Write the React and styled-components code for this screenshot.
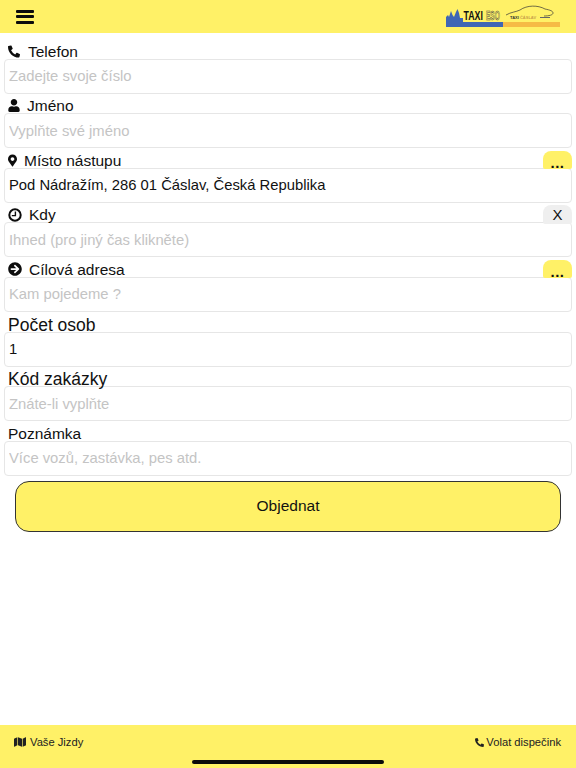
import React from "react";
import styled, { createGlobalStyle } from "styled-components";
import { FaPhoneAlt, FaUser, FaMapMarkerAlt, FaArrowCircleRight, FaMap } from "react-icons/fa";

const Global = createGlobalStyle`
  html, body { margin: 0; padding: 0; background: #fff; }
  #root { height: 768px; }
  * { box-sizing: border-box; }
`;
const Page = styled.div`
  width: 576px; height: 768px; display: flex; flex-direction: column;
  font-family: "Liberation Sans", Arial, sans-serif; color: #111; overflow: hidden; position: relative;
`;
const Header = styled.header`
  height: 33px; flex: none; background: #fff167; display: flex; align-items: center;
  justify-content: space-between; padding: 0 14px 0 16px;
`;
const Burger = styled.div`
  width: 18px; height: 14px; display: flex; flex-direction: column; justify-content: space-between;
  span { display: block; height: 3px; background: #0c0c0c; border-radius: 1px; }
`;
const Form = styled.main`
  flex: 1; padding: 6px 4px 0; display: flex; flex-direction: column;
`;
const Field = styled.div`
  display: flex; flex-direction: column; height: 54.6px; justify-content: flex-end; position: relative;
`;
const Label = styled.label`
  display: flex; align-items: center; font-size: ${p => p.$size || 15.5}px; line-height: 17px; height: 17px;
  margin-bottom: ${p => (p.$size > 16 ? -2 : -1)}px;
  padding-left: 4px; gap: ${p => p.$gap ?? 8}px; color: #111; white-space: nowrap;
  position: relative; z-index: 2; pointer-events: none;
`;
const IconSlot = styled.span`
  display: inline-flex; align-items: center; justify-content: center; width: ${p => p.$w || 12}px;
  color: #0d0d0d;
`;
const Input = styled.input`
  display: block; width: 100%; height: 35px; flex: none; border: 1px solid #e6e6e6; border-radius: 4px;
  padding: 0 4px; font: 14.8px "Liberation Sans", Arial, sans-serif; color: #111; background: #fff; outline: none;
  position: relative; z-index: 1;
  &::placeholder { color: #c4c4c4; opacity: 1; }
`;
const Pill = styled.button`
  position: absolute; right: 0; top: 2.6px; width: 29px; height: 18.4px; border: none; border-radius: 8px 8px 2px 2px;
  background: ${p => (p.$grey ? "#efefef" : "#fff167")}; color: #111; font: 15px "Liberation Sans", Arial, sans-serif;
  padding: ${p => (p.$grey ? "1px 0 0" : "3px 0 0")}; text-align: center; line-height: 18px;
  letter-spacing: ${p => (p.$grey ? 0 : "0.5px")};
  font-weight: ${p => (p.$grey ? 400 : 700)};
  z-index: 2;
`;
const Submit = styled.button`
  display: block; width: 546px; height: 51px; margin: 5px 0 0 11px; flex: none; background: #fff167;
  border: 1px solid #333; border-radius: 14px; font: 15.5px "Liberation Sans", Arial, sans-serif; color: #111;
`;
const Footer = styled.footer`
  height: 43px; flex: none; background: #fff167; display: flex; justify-content: space-between;
  padding: 10px 15px 0 14px; font-size: 11.2px; color: #222;
`;
const FootLink = styled.span`
  display: inline-flex; align-items: center; gap: ${p => p.$gap}px; height: 14px; white-space: nowrap;
`;
const HomeBar = styled.div`
  position: absolute; left: 192px; bottom: 4px; width: 192px; height: 4px; border-radius: 2px; background: #0a0a0a;
`;

const Clock = () => (
  <svg width="14" height="14" viewBox="0 0 14 14" fill="none" stroke="#0d0d0d">
    <circle cx="7" cy="7" r="5.7" strokeWidth="2" />
    <path d="M7.4 3.6V7.6H3.8" strokeWidth="1.4" />
  </svg>
);

const Logo = () => (
  <svg width="116" height="27" viewBox="0 0 116 27">
    <rect x="0" y="19" width="57" height="5" fill="#3f66b5" />
    <rect x="57" y="19" width="57" height="5" fill="#f6bb45" />
    <path d="M0 20V14L2 12L3 14L5 8L6.5 12L8 14L10 9L11.5 6L13 10L14 15L17 15V20Z" fill="#3f66b5" />
    <g transform="translate(17.5 17) scale(0.68 1)">
      <text fontFamily="Liberation Sans, sans-serif" fontWeight="700" fontSize="13" fill="#111">TAXI</text>
    </g>
    <g transform="translate(40 17) scale(0.5 1)">
      <text fontFamily="Liberation Sans, sans-serif" fontWeight="700" fontSize="13" fill="#fff167" stroke="#444" strokeWidth="0.6">ESO</text>
    </g>
    <path d="M60 12C65 9 70 9 74 7C81 2 92 2 99 6C104 7 107 8 107 10C107 12 103 13 98 13" fill="none" stroke="#333" strokeWidth="0.7" />
    <text x="64" y="15.5" fontFamily="Liberation Sans, sans-serif" fontWeight="700" fontSize="4" fill="#333">
      TAXI <tspan fill="#c9a04a">ČÁSLAV</tspan>
    </text>
    <rect x="94" y="14" width="10" height="1" fill="#666" />
  </svg>
);

const fields = [
  { label: "Telefon", icon: <FaPhoneAlt size={13} />, ph: "Zadejte svoje číslo", gap: 8, w: 12 },
  { label: "Jméno", icon: <FaUser size={13} />, ph: "Vyplňte své jméno", gap: 7, w: 12 },
  { label: "Místo nástupu", icon: <FaMapMarkerAlt size={13} />, val: "Pod Nádražím, 286 01 Čáslav, Česká Republika", pill: "...", gap: 7, w: 9 },
  { label: "Kdy", icon: <Clock />, ph: "Ihned (pro jiný čas klikněte)", pill: "X", grey: true, gap: 7, w: 14 },
  { label: "Cílová adresa", icon: <FaArrowCircleRight size={14} />, ph: "Kam pojedeme ?", pill: "...", gap: 7, w: 14 },
  { label: "Počet osob", val: "1", size: 17.5 },
  { label: "Kód zakázky", ph: "Znáte-li vyplňte", size: 17.5 },
  { label: "Poznámka", ph: "Více vozů, zastávka, pes atd.", size: 15.5 },
];

export default function App() {
  return (
    <Page>
      <Global />
      <Header>
        <Burger><span /><span /><span /></Burger>
        <Logo />
      </Header>
      <Form>
        {fields.map(f => (
          <Field key={f.label}>
            <Label $size={f.size} $gap={f.gap}>
              {f.icon && <IconSlot $w={f.w}>{f.icon}</IconSlot>}
              {f.label}
            </Label>
            {f.pill && <Pill $grey={f.grey}>{f.pill}</Pill>}
            <Input placeholder={f.ph} defaultValue={f.val} />
          </Field>
        ))}
        <Submit>Objednat</Submit>
      </Form>
      <Footer>
        <FootLink $gap={4}><FaMap size={12} /> Vaše Jizdy</FootLink>
        <FootLink $gap={2}><FaPhoneAlt size={9} /> Volat dispečink</FootLink>
      </Footer>
      <HomeBar />
    </Page>
  );
}
